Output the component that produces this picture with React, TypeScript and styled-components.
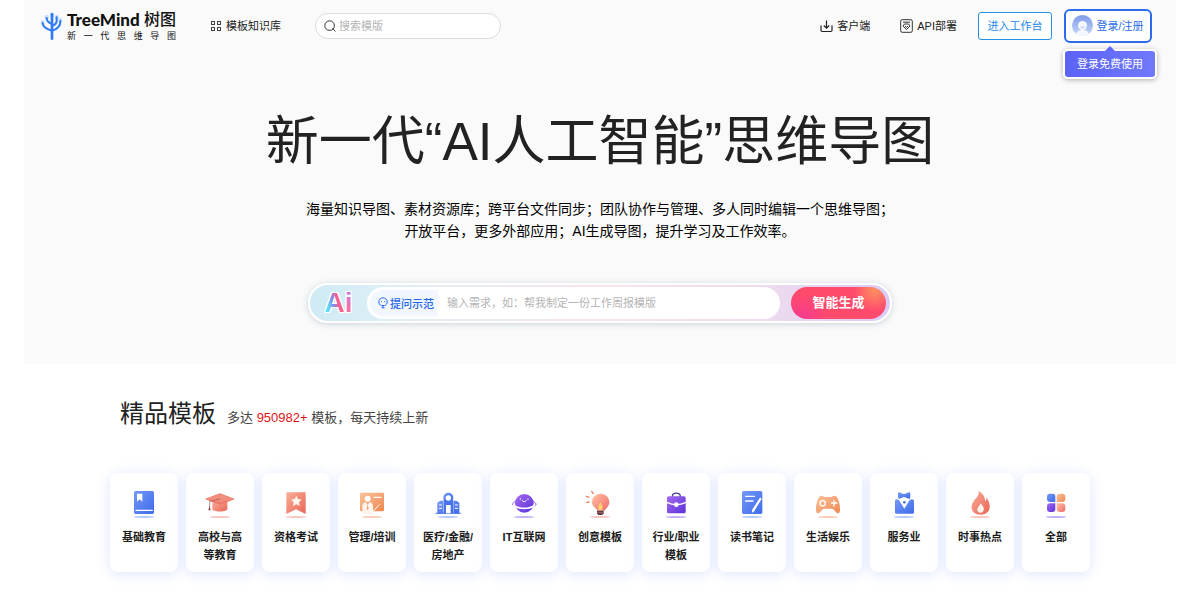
import React from "react";
import styled, { createGlobalStyle } from "styled-components";

const GlobalStyle = createGlobalStyle`
  * { box-sizing: border-box; }
  body {
    margin: 0;
    background: #fff;
    color: #222;
    font-family: "Liberation Sans", "Noto Sans CJK SC", sans-serif;
    font-size: 11px;
  }
  a { color: inherit; text-decoration: none; }
  button, input { font-family: inherit; }
  h1, h2, p { margin: 0; font-weight: 400; }
`;

const Page = styled.div`
  margin: 0 24px;
`;

const Hero = styled.div`
  background: #fafafa;
  padding-bottom: 41px;
`;

const Header = styled.header`
  display: flex;
  align-items: center;
  height: 52px;
  padding: 0 24px 0 16px;
`;

const Logo = styled.a`
  display: flex;
  align-items: center;
  gap: 4px;
  color: #111;
  margin-right: 34px;
`;

const LogoText = styled.span`
  display: flex;
  flex-direction: column;
  width: 109px;
`;

const LogoName = styled.span`
  display: flex;
  align-items: center;
  justify-content: space-between;
  line-height: 20px;
  white-space: nowrap;
  font-size: 16px;
  font-weight: 500;
`;

const LogoLatin = styled.b`
  font-family: Lato, sans-serif;
  font-size: 17px;
  font-weight: 900;
`;

const LogoTagline = styled.span`
  font-size: 9px;
  line-height: 12px;
  text-align: justify;
  text-align-last: justify;
`;

const NavLink = styled.a`
  display: flex;
  align-items: center;
  gap: 4px;
  line-height: 16px;
  white-space: nowrap;
`;

const SearchBox = styled.label`
  display: flex;
  align-items: center;
  gap: 3px;
  width: 186px;
  height: 26px;
  margin-left: 34px;
  padding: 0 8px;
  border: 1px solid #dcdcdc;
  border-radius: 13px;
  background: #fff;
`;

const TextInput = styled.input`
  flex: 1;
  min-width: 0;
  padding: 0;
  border: 0;
  outline: 0;
  background: transparent;
  font-size: 11px;
  &::placeholder { color: #b4b4b4; opacity: 1; }
`;

const Actions = styled.div`
  display: flex;
  align-items: center;
  margin-left: auto;
`;

const ActionLinks = styled.nav`
  display: flex;
  gap: 30px;
  margin-right: 21px;
`;

const WorkspaceButton = styled.button`
  width: 74px;
  height: 28px;
  padding: 0 0 2px;
  border: 1px solid #2490e8;
  border-radius: 3px;
  background: #fff;
  color: #1d86e8;
  font-size: 11px;
`;

const LoginArea = styled.div`
  position: relative;
  margin-left: 12px;
`;

const LoginButton = styled.button`
  display: flex;
  align-items: center;
  justify-content: center;
  gap: 3px;
  width: 88px;
  height: 34px;
  padding: 0 0 2px;
  border: 2px solid #2c6bee;
  border-radius: 6px;
  background: #fff;
  color: #2a6ce6;
  font-size: 11px;
  white-space: nowrap;
`;

const LoginTip = styled.div`
  position: absolute;
  top: 40px;
  right: -5px;
  width: 94px;
  height: 30px;
  border: 2px solid #fff;
  border-radius: 5px;
  background: linear-gradient(90deg, #5b63f6, #6f79fb);
  box-shadow: 0 1px 5px rgba(0, 0, 0, 0.3);
  color: #fff;
  line-height: 26px;
  text-align: center;
  white-space: nowrap;
  &::before {
    content: "";
    position: absolute;
    left: 50%;
    bottom: 100%;
    margin-left: -5px;
    border: 5px solid transparent;
    border-top: 0;
    border-bottom-color: #5f67f7;
  }
`;

const Title = styled.h1`
  margin-top: 55px;
  font-size: 53px;
  line-height: 70px;
  text-align: center;
`;

const Intro = styled.p`
  margin-top: 21px;
  color: #000;
  font-size: 14px;
  line-height: 22px;
  text-align: center;
`;

const Generator = styled.form`
  display: flex;
  align-items: center;
  max-width: 584px;
  height: 40px;
  margin: 41px auto 0;
  padding-right: 4px;
  border: 2px solid #fff;
  border-radius: 20px;
  background: linear-gradient(90deg, #cfebf5, #dceef6 12%, #f8e4ea 50%, #eedcee 78%, #d9cbf6);
  box-shadow: 0 1px 6px rgba(60, 90, 120, 0.25);
`;

const AiMark = styled.span`
  width: 57px;
  text-align: center;
  font-size: 28px;
  font-weight: 700;
  line-height: 32px;
  color: transparent;
  background: linear-gradient(75deg, #5fe0f5 32%, #7f8df0 42%, #ff5f8a 50%, #ff6f9c 62%, #b87cf8 72%);
  background-clip: text;
  -webkit-background-clip: text;
  filter: drop-shadow(1px 0 0 #fff) drop-shadow(-1px 0 0 #fff) drop-shadow(0 1px 0 #fff) drop-shadow(0 -1px 0 #fff);
`;

const PromptBox = styled.div`
  display: flex;
  flex: 1;
  align-items: center;
  gap: 9px;
  height: 32px;
  padding-left: 3px;
  border-radius: 16px;
  background: #fff;
`;

const SampleButton = styled.button`
  display: flex;
  align-items: center;
  gap: 2px;
  height: 26px;
  padding: 0 4px 0 8px;
  border: 0;
  border-radius: 13px 0 0 13px;
  background: #f1f6ff;
  color: #2468e8;
  font-size: 11px;
  font-weight: 500;
  white-space: nowrap;
`;

const GenerateButton = styled.button`
  width: 95px;
  height: 32px;
  margin-left: 11px;
  padding: 0 0 3px;
  border: 0;
  border-radius: 16px;
  background:
    radial-gradient(circle at 88% 10%, #ff9060, transparent 24%),
    radial-gradient(circle at 12% 100%, #f53a90, transparent 28%),
    #ff4a6c;
  color: #fff;
  font-size: 13px;
  font-weight: 700;
`;

const Templates = styled.section`
  max-width: 980px;
  margin: 0 auto;
  padding: 32px 0 28px;
`;

const SectionHead = styled.div`
  display: flex;
  align-items: baseline;
  gap: 11px;
  padding-left: 10px;
  line-height: 36px;
`;

const SectionTitle = styled.h2`
  font-size: 24px;
`;

const SectionNote = styled.p`
  color: #444;
  font-size: 13px;
`;

const Count = styled.span`
  color: #e01515;
`;

const CardGrid = styled.div`
  display: grid;
  grid-template-columns: repeat(13, 1fr);
  gap: 8px;
  margin-top: 37px;
`;

const Card = styled.a`
  display: flex;
  flex-direction: column;
  align-items: center;
  gap: 9px;
  min-height: 99px;
  padding: 14px 8px 8px;
  border-radius: 8px;
  background: #fff;
  box-shadow: 0 2px 14px rgba(90, 125, 255, 0.2);
  color: #1c1c1c;
  font-weight: 700;
  line-height: 18px;
  text-align: center;
`;

const CardLabel = styled.span`
  white-space: nowrap;
`;

const TreeLogo = () => (
  <svg width="23" height="30" viewBox="0 0 69 90" fill="none" strokeLinecap="round" aria-hidden="true">
    <g stroke="#c9defc" strokeWidth="12">
      <path d="M8 33v3M20 17v4M36 10v4M50 17v3M61 26v5" />
    </g>
    <g stroke="#2f7bf5" strokeWidth="6">
      <path d="M36 10v73" strokeWidth="8" />
      <path d="M8 36c1 15 14 17 26 23M20 21c0 10 6 14 14 17M50 19v12c0 8-5 10-12 13M61 30c1 16-9 24-24 29" />
    </g>
  </svg>
);

const GridIcon = () => (
  <svg width="12" height="12" viewBox="0 0 12 12" fill="none" stroke="#444" aria-hidden="true">
    <rect x="1.5" y="1.5" width="3" height="3" />
    <rect x="7.5" y="1.5" width="3" height="3" />
    <rect x="1.5" y="7.5" width="3" height="3" />
    <rect x="7.5" y="7.5" width="3" height="3" />
  </svg>
);

const SearchIcon = () => (
  <svg width="12" height="12" viewBox="0 0 12 12" fill="none" stroke="#333" aria-hidden="true">
    <circle cx="5.6" cy="5.6" r="4.8" />
    <path d="M9 9l2.2 2.2" strokeLinecap="round" />
  </svg>
);

const DownloadIcon = () => (
  <svg width="13" height="13" viewBox="0 0 13 13" fill="none" stroke="#222" strokeWidth="1.2" aria-hidden="true">
    <path d="M1 5.500v4.800q0 1.200 1.200 1.200h8.600q1.200 0 1.200-1.200V5.500M6.500 0.500v7.600M3.800 5.500l2.700 2.700 2.700-2.700" />
  </svg>
);

const ApiIcon = () => (
  <svg width="13" height="14" viewBox="0 0 13 14" fill="none" stroke="#333" aria-hidden="true">
    <rect x="0.7" y="0.7" width="11.6" height="12.6" rx="1.5" />
    <path d="M3 3.2h7M4.5 5h4l1.500 2-3.500 3.600L3 7zM5 7l1.500 1.400L8 7" />
  </svg>
);

const Avatar = () => (
  <svg width="21" height="21" viewBox="0 0 21 21" aria-hidden="true">
    <defs>
      <linearGradient id="avatar" x1="0" y1="0" x2="0" y2="1">
        <stop offset="0" stopColor="#7f9ae8" />
        <stop offset="1" stopColor="#c9d8fa" />
      </linearGradient>
      <clipPath id="avatarClip"><circle cx="10.5" cy="10.5" r="10.5" /></clipPath>
    </defs>
    <g clipPath="url(#avatarClip)">
      <rect width="21" height="21" fill="url(#avatar)" />
      <path d="M4 21c0-4 2-6 6.500-6s6.500 2 6.500 6z" fill="#f4f7ff" />
      <circle cx="10.5" cy="10.5" r="4.500" fill="#f4f7ff" />
      <path d="M8.700 11.700c1 1.100 2.600 1.100 3.600 0" stroke="#8ba4ea" strokeWidth="0.8" fill="none" />
    </g>
  </svg>
);

const BulbIcon = () => (
  <svg width="10" height="12" viewBox="0 0 10 12" fill="none" stroke="#2468e8" aria-hidden="true">
    <path d="M3.400 8.600C1.800 8 .8 6.700.8 5a4.200 4.200 0 018.400 0c0 1.700-1 3-2.600 3.600zM3.500 10.800h3M5 8.500v2" />
    <path d="M3.500 4.200v1M6.500 4.200v1" />
  </svg>
);

const Gradients = () => (
  <svg width="0" height="0" aria-hidden="true" display="block">
    <defs>
      {[
        ["blue", "#7398f6", "#3f6bea"],
        ["red", "#f8ad98", "#ea6556"],
        ["orange", "#fbc29b", "#ee8750"],
        ["violet", "#a56af2", "#5a31d8"],
        ["pink", "#ffc3a4", "#f06a6a"],
      ].map(([id, from, to]) => (
        <linearGradient key={id} id={id} x1="0" y1="0" x2="1" y2="1">
          <stop offset="0" stopColor={from} />
          <stop offset="1" stopColor={to} />
        </linearGradient>
      ))}
    </defs>
  </svg>
);

const shadowColors = { blue: "#b9cbfb", red: "#f8c6c0", orange: "#facfb6", violet: "#c3b2f4" };

type IconProps = { shadow: keyof typeof shadowColors; children: React.ReactNode };

const CardIcon = ({ shadow, children }: IconProps) => (
  <svg width="32" height="32" viewBox="0 0 96 96" fill="none" strokeLinecap="round" strokeLinejoin="round" aria-hidden="true">
    <ellipse cx="48" cy="90" rx="31" ry="3" fill={shadowColors[shadow]} />
    {children}
  </svg>
);

const categories = [
  {
    lines: ["基础教育"],
    icon: (
      <CardIcon shadow="blue">
        <rect x="18" y="12" width="60" height="69" rx="5" fill="url(#blue)" />
        <path d="M27 20h16v24l-8-7-8 7z" fill="#fff" />
        <path d="M24 70h49" stroke="#fff" strokeWidth="4" />
      </CardIcon>
    ),
  },
  {
    lines: ["高校与高", "等教育"],
    icon: (
      <CardIcon shadow="red">
        <path d="M25 44h45v24c-10 7-35 7-45 0z" fill="url(#red)" />
        <path d="M2 36l46-17 45 17-45 17z" fill="#ed7768" />
        <path d="M5 35l43-14 41 14-41 11z" fill="#f18f7e" />
        <path d="M48 36L17 43v16" stroke="#a84a40" strokeWidth="2" />
        <path d="M17 56l-4 14h7z" fill="#8b4037" />
      </CardIcon>
    ),
  },
  {
    lines: ["资格考试"],
    icon: (
      <CardIcon shadow="red">
        <path d="M19 16h58v65L48 67 19 81z" fill="url(#red)" />
        <path d="M49 26l5 10 11 2-8 8 2 11-10-5-10 5 2-11-8-8 11-2z" fill="#fff4ef" />
      </CardIcon>
    ),
  },
  {
    lines: ["管理/培训"],
    icon: (
      <CardIcon shadow="orange">
        <rect x="12" y="17" width="72" height="56" rx="4" fill="url(#orange)" />
        <path d="M54 31h21" stroke="#fff" strokeWidth="4" />
        <path d="M51 73l19-20" stroke="#fff" strokeWidth="3" />
        <circle cx="35" cy="35" r="9" fill="#fff" />
        <path d="M19 82V57c0-7 5-11 11-11l5 8 5-8c7 0 11 4 11 11v25z" fill="#fff3ec" />
        <path d="M35 52l-3 13 3 4 3-4z" fill="#f3a071" />
      </CardIcon>
    ),
  },
  {
    lines: ["医疗/金融/", "房地产"],
    icon: (
      <CardIcon shadow="blue">
        <path d="M16 79V47l9-6h9v38zM64 79V41h9l9 6v32z" fill="url(#blue)" />
        <circle cx="49" cy="32" r="15" fill="url(#blue)" />
        <path d="M35 38h28v41H35z" fill="#4973ec" />
        <path d="M12 79h73" stroke="#3f6bea" strokeWidth="3" />
        <circle cx="49" cy="33" r="8" fill="#fff" />
        <path d="M42 54h14v25H42z" fill="#fff" />
        <path d="M22 54h7M22 64h7M70 54h7M70 64h7" stroke="#fff" strokeWidth="3" />
      </CardIcon>
    ),
  },
  {
    lines: ["IT互联网"],
    icon: (
      <CardIcon shadow="violet">
        <path d="M22 43c-12 7-10 14-1 14M76 43c12 7 10 14 1 14" stroke="#8560e5" strokeWidth="3" />
        <circle cx="49" cy="49" r="28" fill="url(#violet)" />
        <path d="M18 55c15 12 46 12 61 0" stroke="#fff" strokeWidth="5" />
        <path d="M43 41c3 4 9 4 12 0" stroke="#fff" strokeWidth="3" />
        <circle cx="37" cy="36" r="2" fill="#fff" />
        <circle cx="60" cy="36" r="2" fill="#fff" />
      </CardIcon>
    ),
  },
  {
    lines: ["创意模板"],
    icon: (
      <CardIcon shadow="red">
        <path d="M50 20c15 0 26 11 26 25 0 13-9 17-14 26H40c-4-9-16-12-16-26 0-14 11-25 26-25z" fill="url(#pink)" />
        <path d="M45 69c-5-13 2-16 4-25 5 10 9 14 5 25z" fill="#ffd16f" />
        <path d="M39 71h20v8l-4 5H43l-4-5z" fill="#623d46" />
        <path d="M40 77h18" stroke="#b98078" strokeWidth="2" />
        <path d="M23 13l5 7M7 28l8 3M8 46l7-1" stroke="#ef8060" strokeWidth="4" />
      </CardIcon>
    ),
  },
  {
    lines: ["行业/职业", "模板"],
    icon: (
      <CardIcon shadow="violet">
        <path d="M37 29c0-14 24-14 24 0" stroke="#4d3b9a" strokeWidth="4" />
        <rect x="21" y="28" width="56" height="51" rx="5" fill="url(#violet)" />
        <path d="M22 47c16 8 39 8 54 0" stroke="#fff" strokeWidth="4" />
        <circle cx="49" cy="53" r="7" fill="#fff" />
      </CardIcon>
    ),
  },
  {
    lines: ["读书笔记"],
    icon: (
      <CardIcon shadow="blue">
        <rect x="18" y="12" width="61" height="69" rx="5" fill="url(#blue)" />
        <path d="M29 28h26M29 42h22" stroke="#fff" strokeWidth="4" />
        <path d="M73 36L53 68" stroke="#fff" strokeWidth="7" />
        <path d="M49 66l8 5-9 6z" fill="#fff" />
      </CardIcon>
    ),
  },
  {
    lines: ["生活娱乐"],
    icon: (
      <CardIcon shadow="orange">
        <path d="M28 26c7 0 8 4 12 4h16c4 0 5-4 12-4 10 0 17 27 16 44-1 10-7 11-13 4-5-6-8-9-14-9H39c-6 0-9 3-14 9-6 7-12 6-13-4-1-17 6-44 16-44z" fill="url(#orange)" />
        <circle cx="32" cy="49" r="8" stroke="#fff" strokeWidth="4" />
        <path d="M66 40v17M58 48h17" stroke="#fff" strokeWidth="4" />
      </CardIcon>
    ),
  },
  {
    lines: ["服务业"],
    icon: (
      <CardIcon shadow="blue">
        <path d="M32 15l16 7 17-7c3 7 3 14 0 21l-17-6-16 6c-3-7-3-14 0-21z" fill="url(#blue)" />
        <path d="M26 37l7 2 16 26 16-26 7-2c4 0 6 2 6 6v33c0 3-1 4-4 4H25c-3 0-4-1-4-4V43c0-4 1-6 5-6z" fill="url(#blue)" />
        <circle cx="49" cy="46" r="4" fill="#4a75ee" />
      </CardIcon>
    ),
  },
  {
    lines: ["时事热点"],
    icon: (
      <CardIcon shadow="red">
        <path d="M44 12c20 13 17 22 20 30 3-1 4-6 3-11 18 25 12 52-17 52-28 0-34-24-20-42 7-9 15-14 14-29z" fill="url(#red)" />
        <path d="M50 49c6 9 11 12 9 20-2 11-18 10-19 0-1-7 6-11 10-20z" fill="#fff3ed" />
      </CardIcon>
    ),
  },
  {
    lines: ["全部"],
    icon: (
      <CardIcon shadow="violet">
        <path d="M30 20h8c5 0 8 3 8 8v17H30c-6 0-9-4-9-9v-7c0-6 3-9 9-9z" fill="url(#blue)" />
        <path d="M59 20h8c5 0 9 3 9 9v7c0 5-4 9-9 9H50V29c0-6 3-9 9-9z" fill="url(#orange)" />
        <path d="M30 49h16v17c0 5-3 9-8 9h-8c-6 0-9-3-9-9v-8c0-5 3-9 9-9z" fill="url(#violet)" />
        <path d="M50 49h17c5 0 9 4 9 9v8c0 6-4 9-9 9h-8c-5 0-9-4-9-9z" fill="url(#pink)" />
      </CardIcon>
    ),
  },
];

export default function App() {
  return (
    <Page>
      <GlobalStyle />
      <Gradients />
      <Hero>
        <Header>
          <Logo href="#">
            <TreeLogo />
            <LogoText>
              <LogoName>
                <LogoLatin>TreeMind</LogoLatin>树图
              </LogoName>
              <LogoTagline>新一代思维导图</LogoTagline>
            </LogoText>
          </Logo>
          <NavLink href="#">
            <GridIcon />
            模板知识库
          </NavLink>
          <SearchBox>
            <SearchIcon />
            <TextInput type="text" placeholder="搜索模版" aria-label="搜索模版" />
          </SearchBox>
          <Actions>
            <ActionLinks>
              <NavLink href="#">
                <DownloadIcon />
                客户端
              </NavLink>
              <NavLink href="#">
                <ApiIcon />
                API部署
              </NavLink>
            </ActionLinks>
            <WorkspaceButton type="button">进入工作台</WorkspaceButton>
            <LoginArea>
              <LoginButton type="button">
                <Avatar />
                登录/注册
              </LoginButton>
              <LoginTip>登录免费使用</LoginTip>
            </LoginArea>
          </Actions>
        </Header>
        <Title>新一代“AI人工智能”思维导图</Title>
        <Intro>
          海量知识导图、素材资源库；跨平台文件同步；团队协作与管理、多人同时编辑一个思维导图；
          <br />
          开放平台，更多外部应用；AI生成导图，提升学习及工作效率。
        </Intro>
        <Generator onSubmit={(event) => event.preventDefault()}>
          <AiMark>Ai</AiMark>
          <PromptBox>
            <SampleButton type="button">
              <BulbIcon />
              提问示范
            </SampleButton>
            <TextInput
              type="text"
              aria-label="输入需求"
              placeholder="输入需求，如：帮我制定一份工作周报模版"
            />
          </PromptBox>
          <GenerateButton type="submit">智能生成</GenerateButton>
        </Generator>
      </Hero>
      <Templates>
        <SectionHead>
          <SectionTitle>精品模板</SectionTitle>
          <SectionNote>
            多达 <Count>950982+</Count> 模板，每天持续上新
          </SectionNote>
        </SectionHead>
        <CardGrid>
          {categories.map(({ lines, icon }) => (
            <Card href="#" key={lines[0]}>
              {icon}
              <CardLabel>
                {lines[0]}
                {lines[1] && <br />}
                {lines[1]}
              </CardLabel>
            </Card>
          ))}
        </CardGrid>
      </Templates>
    </Page>
  );
}
